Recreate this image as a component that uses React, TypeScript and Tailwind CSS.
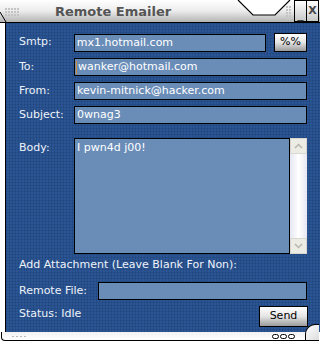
import React from "react";

const font = { fontFamily: '"DejaVu Sans", Verdana, sans-serif' };

function Field({ children, className = "" }: { children?: React.ReactNode; className?: string }) {
  return (
    <div className={"h-[18px] border border-black bg-[#6a8db8] text-[11px] leading-[16px] text-white pl-[2px] whitespace-nowrap overflow-hidden " + className}>
      {children}
    </div>
  );
}

function Row({ label, children }: { label: string; children: React.ReactNode }) {
  return (
    <div className="flex items-center">
      <div className="w-[55px] text-[11px] text-[#eef2fa]">{label}</div>
      {children}
    </div>
  );
}

function GrayButton({ children, className = "" }: { children: React.ReactNode; className?: string }) {
  return (
    <div className={"border border-black bg-gradient-to-b from-white via-[#e4e4e4] to-[#9c9c9c] text-black text-[11px] flex items-center justify-center " + className}>
      {children}
    </div>
  );
}

function Dots({ cols, rows }: { cols: number; rows: number }) {
  return (
    <div className="grid gap-[1px]" style={{ gridTemplateColumns: `repeat(${cols}, 2px)` }}>
      {[...Array(cols * rows)].map((_, i) => (
        <span key={i} className="w-[2px] h-[2px] bg-[#c4c4c4]" />
      ))}
    </div>
  );
}

export default function App() {
  return (
    <div className="w-[320px] h-[344px] bg-white overflow-hidden flex flex-col" style={font}>
      {/* Title bar */}
      <div className="relative h-[23px] shrink-0 flex bg-gradient-to-b from-white via-[#ececec] to-[#b4b4b4] border-b border-black">
        <svg className="absolute left-0 top-0" width="320" height="23">
          <polygon points="238,0 253,15 275,15 290,0" fill="#fff" />
          <polyline points="238,0 253,15 275,15 290,0" fill="none" stroke="#000" strokeWidth="1.2" />
          <polyline points="0,12 6,22" fill="none" stroke="#000" strokeWidth="1" />
        </svg>
        <div className="relative pl-[5px] pt-[8px]">
          <Dots cols={5} rows={3} />
        </div>
        <div className="relative flex-1 pl-[36px] pt-[2px] text-[13px] font-bold text-[#555]">Remote Emailer</div>
        <div className="relative flex h-[22px]">
          <div className="pt-[6px] pr-[3px]">
            <Dots cols={2} rows={5} />
          </div>
          <div className="w-[12px] border border-black border-r-0 bg-gradient-to-b from-white to-[#c8c8c8] text-[12px] font-bold text-[#444] flex items-end justify-center leading-[14px]">_</div>
          <div className="w-[13px] mr-[1px] border border-black bg-gradient-to-b from-white to-[#c8c8c8] text-[11px] font-bold text-[#444] flex items-center justify-center">X</div>
        </div>
      </div>

      {/* Main panel */}
      <div
        className="ml-[5px] h-[309px] shrink-0 border-l border-black bg-[#2b5592] pl-[13px] pr-[13px] pt-[10px] flex flex-col"
        style={{
          backgroundImage:
            "linear-gradient(90deg, rgba(0,20,60,0.12) 1px, transparent 1px), linear-gradient(rgba(0,20,60,0.12) 1px, transparent 1px)",
          backgroundSize: "3px 3px",
        }}
      >
        <div className="flex flex-col gap-[6px]">
          <Row label="Smtp:">
            <Field className="w-[193px]">mx1.hotmail.com</Field>
            <GrayButton className="ml-[8px] w-[33px] h-[19px]">%%</GrayButton>
          </Row>
          <Row label="To:">
            <Field className="w-[233px]">
              <span className="inline-block w-[1px] h-[13px] bg-[#d08a3a] align-middle -ml-[1px] mr-[1px]" />
              wanker@hotmail.com
            </Field>
          </Row>
          <Row label="From:">
            <Field className="w-[233px]">kevin-mitnick@hacker.com</Field>
          </Row>
          <Row label="Subject:">
            <Field className="w-[233px]">0wnag3</Field>
          </Row>
        </div>

        <div className="flex mt-[14px]">
          <div className="w-[55px] text-[11px] text-[#eef2fa] pt-[2px]">Body:</div>
          <div className="flex h-[116px]">
            <div className="w-[216px] border border-black bg-[#6a8db8] text-[11px] text-white pl-[2px] pt-[1px]">I pwn4d j00!</div>
            <div className="w-[17px] bg-gradient-to-r from-[#e6e6f2] via-white to-[#e6e6f2] flex flex-col justify-between">
              <div className="h-[16px] bg-[#ecece4] border border-[#d8d8d0] flex items-center justify-center">
                <svg width="9" height="6"><polyline points="1,5 4.5,1.5 8,5" fill="none" stroke="#b8b8b0" strokeWidth="1.5" /></svg>
              </div>
              <div className="h-[16px] bg-[#ecece4] border border-[#d8d8d0] flex items-center justify-center">
                <svg width="9" height="6"><polyline points="1,1 4.5,4.5 8,1" fill="none" stroke="#b8b8b0" strokeWidth="1.5" /></svg>
              </div>
            </div>
          </div>
        </div>

        <div className="mt-[3px] h-[16px] leading-[16px] text-[11px] text-[#eef2fa]">Add Attachment (Leave Blank For Non):</div>

        <div className="flex items-center mt-[9px]">
          <div className="w-[79px] text-[11px] text-[#eef2fa]">Remote File:</div>
          <Field className="w-[209px]" />
        </div>

        <div className="flex items-start justify-between mt-[6px]">
          <div className="text-[11px] leading-[16px] text-[#eef2fa]">Status: Idle</div>
          <GrayButton className="w-[49px] h-[21px] mr-[-1px]">Send</GrayButton>
        </div>
      </div>

      {/* Bottom frame */}
      <div className="relative h-[9px] shrink-0 mx-[1px] border-b border-l border-black rounded-bl-[4px] bg-gradient-to-b from-[#f2f2f2] to-white flex items-center justify-between pl-[10px] pr-[24px]">
        <div className="flex gap-[2px]">
          {[...Array(4)].map((_, i) => <span key={i} className="w-[2px] h-[1px] bg-[#bbb]" />)}
        </div>
        <div className="flex gap-[1px]">
          {[...Array(3)].map((_, i) => <span key={i} className="w-[7px] h-[5px] rounded-full border border-black bg-white" />)}
        </div>
        <div className="absolute right-0 -top-[8px] w-[14px] h-[16px] rounded-tl-[10px] border-t border-l border-black bg-gradient-to-br from-white to-[#ddd]" />
      </div>
    </div>
  );
}
